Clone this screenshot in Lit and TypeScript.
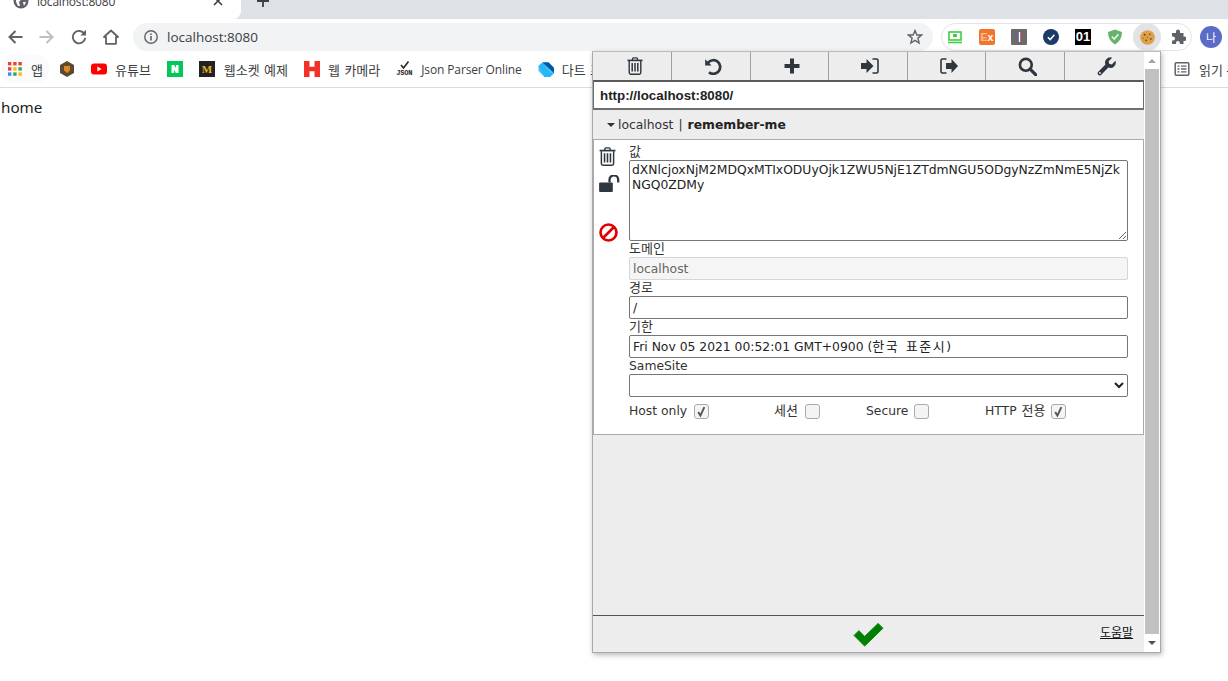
import { LitElement, html, css, svg } from "lit";
import { customElement } from "lit/decorators.js";

const ic = (w: number, h: number, vb: string, body: unknown) =>
  html`<svg width=${w} height=${h} viewBox=${vb} style="flex:none;display:block">${body}</svg>`;

const trash = (w: number, h: number) => ic(w, h, "0 0 16 18", svg`
  <path d="M5.5 3V1.8Q5.5 .8 6.5 .8H9.5Q10.5 .8 10.5 1.8V3" fill="none" stroke="#2e3640" stroke-width="1.3"/>
  <path d="M.5 3.4H15.5" stroke="#2e3640" stroke-width="1.6"/>
  <path d="M2.2 4V15.6Q2.2 17.2 3.8 17.2H12.2Q13.8 17.2 13.8 15.6V4" fill="none" stroke="#2e3640" stroke-width="1.4"/>
  <path d="M5.2 6V14.6M8 6V14.6M10.8 6V14.6" stroke="#2e3640" stroke-width="1.5"/>`);

@customElement("app-root")
export class AppRoot extends LitElement {
  static styles = css`
    :host { display: block; width: 1228px; height: 681px; position: relative; overflow: hidden; background: #fff;
      font-family: "Open Sans", "Noto Sans CJK KR", sans-serif; color: #3c4043; }
    .tabs { height: 19px; background: #dee1e6; display: flex; overflow: hidden; }
    .tab { width: 241px; height: 19px; background: #fff; border-radius: 0 0 8px 0; display: flex; align-items: flex-start; box-sizing: border-box; padding-left: 13px; overflow: hidden; flex: none; }
    .tab-ico { margin-top: -7px; }
    .tab-title { font-size: 12px; line-height: 16px; margin: -6px 0 0 8px; width: 176px; letter-spacing: -.2px; color: #3c4043; }
    .tab-x { margin-top: -4px; }
    .tab-plus { margin: -5px 0 0 16px; }
    .toolbar { height: 28px; margin-top: 4px; display: flex; align-items: center; background: #fff; }
    .nav { width: 32px; display: flex; justify-content: center; }
    .nav:first-child { margin-left: -1px; }
    .omni { margin-left: 6px; width: 800px; height: 28px; background: #f1f3f4; border-radius: 14px; display: flex; align-items: center; box-sizing: border-box; padding: 0 10px; font-size: 13.5px; color: #3c4043; }
    .omni .url { margin-left: 8px; flex: 1; }
    .ext { margin-left: 8px; width: 251px; height: 28px; box-sizing: border-box; border: 1px solid #e3e5e8; border-radius: 14px; display: flex; align-items: center; padding-left: 5px; gap: 16px; }
    .ext-slot { width: 16px; height: 16px; display: flex; align-items: center; justify-content: center; flex: none; }
    .cookie-bg { width: 28px; height: 28px; margin: -1px -6px; border-radius: 50%; background: #e1e3e6; display: flex; align-items: center; justify-content: center; flex: none; }
    .puzzle { margin-left: -1px; }
    .avatar { margin-left: 8px; width: 22px; height: 22px; border-radius: 50%; background: #5c6bc7; color: #fff; font-size: 11px; display: flex; align-items: center; justify-content: center; }
    .bar { height: 37px; border-bottom: 1px solid #dadce0; display: flex; align-items: center; padding-left: 8px; gap: 16px; font-size: 12px; white-space: nowrap; box-sizing: border-box; position: relative; }
    .bm { display: flex; align-items: center; gap: 8px; color: #3c4043; }
    .bm.hover { background: #f9fafb; border-radius: 12px; height: 28px; padding: 0 6px 0 7px; margin: 0 -6px 0 -7px; }
    .bm.wide { gap: 9px; }
    .k { font-size: 13px; word-spacing: 1px; }
    .lat { letter-spacing: -.13px; margin-left: 1px; }
    .bar-right { position: absolute; left: 1163px; top: 0; height: 36px; display: flex; align-items: center; background: #fff; width: 65px; }
    .bar-sep { width: 1px; height: 16px; background: #dadce0; margin-right: 11px; }
    .reader { margin-left: 9px; font-size: 13px; }
    .home { font-size: 15.2px; line-height: 22px; margin: 8px 0 0 1px; color: #222; font-family: "Noto Sans", "Noto Sans CJK KR", sans-serif; }

    .popup { position: absolute; left: 592px; top: 51px; width: 569px; height: 602px; box-sizing: border-box; border: 1px solid #a9a9a9; border-top-color: #bdbdbd; background: #ededed; box-shadow: 1px 2px 5px rgba(0,0,0,.28); display: flex; }
    .main { width: 551px; height: 600px; display: flex; flex-direction: column; font-family: "DejaVu Sans", "Noto Sans CJK KR", sans-serif; font-size: 12.35px; color: #333; }
    .tools { height: 28px; display: flex; flex: none; }
    .tool { width: 78.6px; flex: none; box-sizing: border-box; border-left: 1px solid #a0a0a0; display: flex; align-items: center; justify-content: center; padding-left: 5px; }
    .tool:first-child { border-left: 0; width: 78px; }
    .url-row { height: 30px; flex: none; box-sizing: border-box; background: #fff; border: 1px solid #6e6e6e; border-top: 2px solid #5a5a5a; border-bottom: 2px solid #6e6e6e; display: flex; align-items: center; padding-left: 6px; font: bold 13.33px "Liberation Sans", sans-serif; color: #222; }
    .head { height: 29px; flex: none; display: flex; align-items: center; padding-left: 14px; color: #333; }
    .caret { width: 0; height: 0; border: 4px solid transparent; border-top: 4px solid #333; border-bottom: 0; margin-right: 3px; }
    .head b { font-weight: 700; color: #222; }
    .head .pipe { margin: 0 5px; }
    .detail { flex: none; height: 296px; box-sizing: border-box; background: #fff; border: 1px solid #aaa; display: flex; }
    .side { width: 35px; flex: none; display: flex; flex-direction: column; align-items: flex-start; padding: 7px 0 0 5px; box-sizing: border-box; }
    .sp1 { height: 9px; }
    .sp2 { height: 31px; }
    .form { width: 499px; display: flex; flex-direction: column; line-height: 16px; color: #333; }
    .lbl { height: 16px; line-height: 16px; white-space: nowrap; }
    .lbl.first { margin-top: 4px; }
    .ctl { width: 499px; box-sizing: border-box; border: 1px solid #767676; border-radius: 2px; background: #fff; padding: 0 3px; margin: 0; font: 12.35px/18px "DejaVu Sans", "Noto Sans CJK KR", sans-serif; color: #222; outline: none; display: block; }
    textarea.ctl { height: 81px; resize: both; padding: 2px; line-height: 15px; word-break: break-all; overflow: hidden; }
    input.ctl { height: 23px; }
    input.ctl.dis { background: #f5f5f5; border-color: #d6d6d6; color: #666; }
    .val { height: 23px; line-height: 22px; white-space: nowrap; }
    .val .k { letter-spacing: 1.5px; }
    select.ctl { height: 23px; }
    .checks { display: flex; height: 16px; margin-top: 6px; }
    .chk { display: flex; align-items: center; gap: 7px; white-space: nowrap; }
    .chk.c1 { width: 145px; }
    .chk.c2 { width: 92px; }
    .chk.c3 { width: 119px; gap: 6px; }
    .chk.c4 { gap: 5px; }
    .box { width: 15px; height: 15px; box-sizing: border-box; border: 1px solid #aaa; border-radius: 3px; background: #f4f4f4; display: flex; align-items: center; justify-content: center; }
    .spacer { flex: 1; }
    .foot { flex: none; height: 36px; border-top: 1px solid #555; display: flex; align-items: center; position: relative; justify-content: center; }
    .foot-ok { margin-right: 1px; }
    .help { position: absolute; left: 507px; top: 9px; font-size: 12px; line-height: 16px; color: #111; text-decoration: underline; }
    .sb { width: 16px; display: flex; flex-direction: column; align-items: center; flex: none; background: #fff; }
    .sb-btn { height: 17px; display: flex; align-items: center; justify-content: center; }
    .sb-thumb { width: 14px; height: 565px; background: #c1c1c1; }
    .tri-up { width: 0; height: 0; border: 4px solid transparent; border-bottom: 4px solid #a3a3a3; border-top: 0; }
    .tri-dn { width: 0; height: 0; border: 4px solid transparent; border-top: 4px solid #505050; border-bottom: 0; }
    .fav-m { width: 16px; height: 16px; background: #222; color: #e8b31f; font: bold 11px/16px "Liberation Serif", serif; text-align: center; display: block; }
    .fav-j { width: 16px; height: 16px; position: relative; display: block; color: #222; }
    .fav-j svg { position: absolute; left: 0; top: -1px; }
    .fav-j span { position: absolute; left: 0; top: 8px; font: bold 7px/8px "Liberation Mono", monospace; letter-spacing: -.2px; }
    .ext-ex { width: 16px; height: 16px; background: #f0762b; border-radius: 2px; color: #fff; font: bold 10.5px/16px "Liberation Sans", sans-serif; text-align: center; display: block; }
    .ext-ex i { opacity: .5; font-style: normal; }
    .ext-01 { width: 16px; height: 16px; background: #000; color: #fff; font: bold 13px/16px "Liberation Sans", sans-serif; text-align: center; display: block; }
  `;

  private bookmarks() {
    const apps = ic(14, 14, "0 0 14 14", svg`
      ${[["#ea4335", "#ea4335", "#ea4335"], ["#ea4335", "#fbbc05", "#34a853"], ["#4285f4", "#34a853", "#fbbc05"]].map((r, y) =>
        r.map((c, x) => svg`<rect x=${x * 5.2} y=${y * 5.2} width="3.4" height="3.4" fill=${c}/>`))}`);
    const hex = ic(16, 16, "0 0 16 16", svg`<path d="M8 0L15 4V12L8 16L1 12V4Z" fill="#5c4a33"/><path d="M5 5H11V9.5L8 12L5 9.5Z" fill="#e08a1e"/>`);
    const yt = ic(16, 16, "0 0 16 16", svg`<rect x="0" y="2.5" width="16" height="11" rx="3" fill="#f00"/><path d="M6.4 5.5L10.6 8L6.4 10.5Z" fill="#fff"/>`);
    const n = ic(16, 16, "0 0 16 16", svg`<rect width="16" height="16" fill="#03c75a"/><path d="M4.5 4H7.2L9 7V4H11.5V12H8.8L7 9V12H4.5Z" fill="#fff"/>`);
    const m = html`<span class="fav-m">M</span>`;
    const h = ic(16, 16, "0 0 16 16", svg`<path d="M0 0H5.5V5.8H10.5V0H16V16H10.5V10.2H5.5V16H0Z" fill="#f0322b"/>`);
    const js = html`<span class="fav-j">
      <svg width="16" height="10" viewBox="0 0 16 10"><path d="M5 5L7.5 8L12.5 1.5" fill="none" stroke="#222" stroke-width="1.5"/></svg>
      <span>JSON</span></span>`;
    const dart = ic(16, 16, "0 0 16 16", svg`<path d="M5 1H10.5L16 6.5V12L12 16H6.5L0.5 10V5Z" fill="#40c4ff"/><path d="M4.5 1.5H10.5L16 7V12Z" fill="#01579b"/><path d="M.5 5L4.5 1.5L12 12L16 12L12 16H6.5Z" fill="#29b6f6"/>`);
    return html`<div class="bar">
      <div class="bm hover">${apps}<span class="k" style="margin-left:1px">앱</span></div>
      <div class="bm">${hex}</div>
      <div class="bm">${yt}<span class="k">유튜브</span></div>
      <div class="bm">${n}</div>
      <div class="bm wide">${m}<span class="k">웹소켓 예제</span></div>
      <div class="bm">${h}<span class="k">웹 카메라</span></div>
      <div class="bm">${js}<span class="lat">Json Parser Online</span></div>
      <div class="bm">${dart}<span class="k">다트 프로그래밍</span></div>
      <div class="bar-right">
        <div class="bar-sep"></div>
        ${ic(16, 16, "0 0 16 16", svg`<rect x="1.2" y="1.7" width="13.6" height="12.6" rx="1" fill="none" stroke="#5f6368" stroke-width="1.5"/><path d="M3.5 5.2H5.5M7 5.2H12.5M3.5 8H5.5M7 8H12.5M3.5 10.8H5.5M7 10.8H12.5" stroke="#5f6368" stroke-width="1.3"/>`)}
        <span class="reader">읽기 목록</span>
      </div>
    </div>`;
  }

  private tools() {
    const c = "#2e3640";
    return [
      trash(16, 18),
      ic(18, 17, "0 0 18 17", svg`<path d="M4.2 4.6A6.8 6.8 0 1 1 5 14.2" fill="none" stroke=${c} stroke-width="2.7"/><path d="M1.2 1.2L7.6 7.4H1.2Z" fill=${c}/>`),
      ic(16, 16, "0 0 16 16", svg`<path d="M6 0.5H10V6H15.5V10H10V15.5H6V10H0.5V6H6Z" fill=${c}/>`),
      ic(18, 16, "0 0 18 16", svg`<path d="M0 5H5.5V1L12.5 8L5.5 15V11H0Z" fill=${c}/><path d="M11.5 1H15.5Q17 1 17 2.5V13.5Q17 15 15.5 15H11.5" fill="none" stroke=${c} stroke-width="1.6"/>`),
      ic(18, 16, "0 0 18 16", svg`<path d="M6 5H11.5V1L18 8L11.5 15V11H6Z" fill=${c}/><path d="M6.5 1H2.5Q1 1 1 2.5V13.5Q1 15 2.5 15H6.5" fill="none" stroke=${c} stroke-width="1.6"/>`),
      ic(19, 19, "0 0 18 18", svg`<circle cx="7.4" cy="7.4" r="5.6" fill="none" stroke=${c} stroke-width="2.5"/><path d="M11.5 11.5L17 17" stroke=${c} stroke-width="3" stroke-linecap="round"/>`),
      ic(19, 19, "0 0 18 18", svg`<path d="M17.4 3.6L14 7 11.6 6.4 11 4 14.4.6A5 5 0 0 0 8 7.2L1 14.2A2 2 0 0 0 3.8 17L10.8 10A5 5 0 0 0 17.4 3.6Z" fill=${c}/><circle cx="2.8" cy="15.2" r=".9" fill="#ececec"/>`),
    ];
  }

  private check(on: boolean) {
    return html`<span class="box">${on
      ? ic(11, 11, "0 0 10 10", svg`<path d="M2 5.5L4 8.8L7.6 1" fill="none" stroke="#555" stroke-width="1.7"/>`)
      : ""}</span>`;
  }

  render() {
    const g = "#5f6368";
    return html`
      <div class="tabs">
        <div class="tab">
          <span class="tab-ico">${ic(16, 16, "0 0 16 16", svg`<circle cx="8" cy="8" r="7.5" fill=${g}/><path d="M3 4L7 3L8.5 6L6 9L7 13L5 13L3 9Z M10 2L13 5L11 7L9 5Z M10 9L13 9L11 13Z" fill="#fff"/>`)}</span>
          <span class="tab-title">localhost:8080</span>
          <span class="tab-x">${ic(10, 10, "0 0 10 10", svg`<path d="M1 1L9 9M9 1L1 9" stroke="#3c4043" stroke-width="1.6"/>`)}</span>
        </div>
        <span class="tab-plus">${ic(12, 12, "0 0 12 12", svg`<path d="M6 0V12M0 6H12" stroke="#3c4043" stroke-width="1.8"/>`)}</span>
      </div>
      <div class="toolbar">
        <div class="nav">${ic(16, 16, "0 0 16 16", svg`<path d="M15.5 8H2.5M8.5 2L2.5 8L8.5 14" fill="none" stroke=${g} stroke-width="2"/>`)}</div>
        <div class="nav">${ic(16, 16, "0 0 16 16", svg`<path d="M.5 8H13.5M7.5 2L13.5 8L7.5 14" fill="none" stroke="#bdc1c6" stroke-width="2"/>`)}</div>
        <div class="nav">${ic(16, 16, "0 0 16 16", svg`<path d="M13.4 5A6.2 6.2 0 1 0 14.2 8.8" fill="none" stroke=${g} stroke-width="1.9"/><path d="M15 .8V6.4H9.4Z" fill=${g}/>`)}</div>
        <div class="nav">${ic(16, 16, "0 0 16 16", svg`<path d="M8 1.5L15 8H13V14.8H3V8H1Z" fill="none" stroke=${g} stroke-width="1.8" stroke-linejoin="round"/>`)}</div>
        <div class="omni">
          ${ic(16, 16, "0 0 16 16", svg`<circle cx="8" cy="8" r="6.2" fill="none" stroke=${g} stroke-width="1.4"/><path d="M8 7V11.5M8 4.5V6" stroke=${g} stroke-width="1.6"/>`)}
          <span class="url">localhost:8080</span>
          ${ic(16, 16, "0 0 16 16", svg`<path d="M8 1.6L9.9 6H14.6L10.9 9.1L12.1 14L8 11.3L3.9 14L5.1 9.1L1.4 6H6.1Z" fill="none" stroke=${g} stroke-width="1.4"/>`)}
        </div>
        <div class="ext">
          <span class="ext-slot">${ic(14, 14, "0 0 14 14", svg`<rect x="1" y="2" width="12" height="8" fill="none" stroke="#3ecf3e" stroke-width="1.6"/><rect x="5" y="4" width="4" height="3" fill="#3ecf3e"/><path d="M0 12.5H14" stroke="#3ecf3e" stroke-width="1.6"/>`)}</span>
          <span class="ext-slot"><span class="ext-ex"><i>E</i>x</span></span>
          <span class="ext-slot">${ic(16, 16, "0 0 16 16", svg`<rect width="16" height="16" rx="1" fill="#6b6b6b"/><rect x="7" y="3" width="1" height="10" fill="#6a7cd8"/><rect x="8" y="3" width="1" height="10" fill="#fff"/><rect x="9" y="3" width="1" height="10" fill="#e06060"/>`)}</span>
          <span class="ext-slot">${ic(16, 16, "0 0 16 16", svg`<circle cx="8" cy="8" r="8" fill="#1b3a66"/><path d="M4.8 8.2L7.2 10.6L11.4 5.8" fill="none" stroke="#fff" stroke-width="1.5"/>`)}</span>
          <span class="ext-slot"><span class="ext-01">01</span></span>
          <span class="ext-slot">${ic(16, 16, "0 0 16 16", svg`<path d="M8 0.5L15 3Q15 11.5 8 15.5Q1 11.5 1 3Z" fill="#68b36b"/><path d="M4.8 7.5L7.2 10L11.4 5.4" fill="none" stroke="#e8f5e9" stroke-width="1.7"/>`)}</span>
          <span class="cookie-bg">${ic(15, 15, "0 0 16 16", svg`<circle cx="8" cy="8" r="7.8" fill="#e0a04a"/><circle cx="5" cy="5" r="1" fill="#7a4a1e"/><circle cx="10.5" cy="4.5" r=".9" fill="#7a4a1e"/><circle cx="11.5" cy="9.5" r="1" fill="#7a4a1e"/><circle cx="6.5" cy="11" r="1" fill="#7a4a1e"/><circle cx="8" cy="8" r=".6" fill="#7a4a1e"/><circle cx="3.4" cy="8.6" r=".6" fill="#7a4a1e"/>`)}</span>
          <span class="ext-slot puzzle">${ic(16, 16, "0 0 16 16", svg`<path d="M6 2.5A2 2 0 0 1 10 2.5V4H13.5V7.5H14.5A2.2 2.2 0 0 1 14.5 12H13.5V15H9.8V14A1.9 1.9 0 0 0 6 14V15H2V11.5H3A2 2 0 0 0 3 7.5H2V4H6Z" fill=${g}/>`)}</span>
        </div>
        <div class="avatar">나</div>
      </div>
      ${this.bookmarks()}
      <div class="home">home</div>

      <div class="popup">
        <div class="main">
          <div class="tools">${this.tools().map((t) => html`<div class="tool">${t}</div>`)}</div>
          <div class="url-row">http://localhost:8080/</div>
          <div class="head"><span class="caret"></span><span>localhost</span><span class="pipe">|</span><b>remember-me</b></div>
          <div class="detail">
            <div class="side">
              ${trash(17, 19)}
              <span class="sp1"></span>
              ${ic(21, 17, "0 0 22 18", svg`<rect x="0" y="8" width="14.5" height="10" rx="1" fill="#2e3640"/><path d="M11 8V5A4.6 4.6 0 0 1 20.2 5V8" fill="none" stroke="#2e3640" stroke-width="2.4"/>`)}
              <span class="sp2"></span>
              ${ic(19, 19, "0 0 20 20", svg`<circle cx="10" cy="10" r="8.4" fill="none" stroke="#e00000" stroke-width="2.8"/><path d="M4.2 15.8L15.8 4.2" stroke="#e00000" stroke-width="2.8"/>`)}
            </div>
            <div class="form">
              <div class="lbl first k">값</div>
              <textarea class="ctl" readonly>dXNlcjoxNjM2MDQxMTIxODUyOjk1ZWU5NjE1ZTdmNGU5ODgyNzZmNmE5NjZkNGQ0ZDMy</textarea>
              <div class="lbl k">도메인</div>
              <input class="ctl dis" value="localhost" disabled />
              <div class="lbl k">경로</div>
              <input class="ctl" value="/" />
              <div class="lbl k">기한</div>
              <div class="ctl val">Fri Nov 05 2021 00:52:01 GMT+0900 (<span class="k">한국 표준시</span>)</div>
              <div class="lbl">SameSite</div>
              <select class="ctl"><option></option></select>
              <div class="checks">
                <span class="chk c1">Host only ${this.check(true)}</span>
                <span class="chk c2"><span class="k">세션</span> ${this.check(false)}</span>
                <span class="chk c3">Secure ${this.check(false)}</span>
                <span class="chk c4">HTTP <span class="k">전용</span> ${this.check(true)}</span>
              </div>
            </div>
          </div>
          <div class="spacer"></div>
          <div class="foot">
            <span class="foot-ok">${ic(33, 25, "0 0 34 26", svg`<path d="M2 14L7 9L13 15L27 1.5L32 6.5L13 25Z" fill="#008000" stroke="#008000" stroke-width="1" stroke-linejoin="round"/>`)}</span>
            <span class="help">도움말</span>
          </div>
        </div>
        <div class="sb">
          <div class="sb-btn"><span class="tri-up"></span></div>
          <div class="sb-thumb"></div>
          <div class="sb-btn"><span class="tri-dn"></span></div>
        </div>
      </div>
    `;
  }
}
